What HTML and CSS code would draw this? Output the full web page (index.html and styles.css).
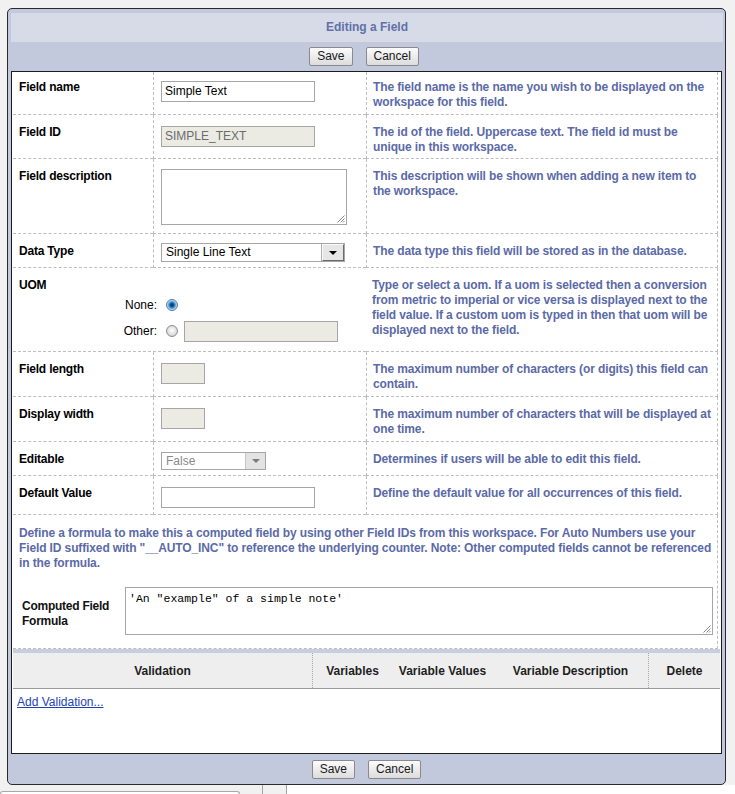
FILE: index.html
```html
<!DOCTYPE html>
<html>
<head>
<meta charset="utf-8">
<title>Editing a Field</title>
<link rel="stylesheet" href="styles.css">
</head>
<body>
<div class="dialog">
  <div class="title">Editing a Field</div>
  <div class="bar top"><span class="btn">Save</span><span class="btn">Cancel</span></div>
  <div class="panel">
    <div class="grid">
      <div class="lbl first">Field name</div>
      <div class="inp first"><div class="field w154">Simple Text</div></div>
      <div class="desc first">The field name is the name you wish to be displayed on the workspace for this field.</div>

      <div class="lbl">Field ID</div>
      <div class="inp"><div class="field w154 off">SIMPLE_TEXT</div></div>
      <div class="desc">The id of the field. Uppercase text. The field id must be unique in this workspace.</div>

      <div class="lbl">Field description</div>
      <div class="inp"><div class="textarea small"><svg class="grip" width="9" height="9" viewBox="0 0 9 9"><path d="M8.5 1.5 L1.5 8.5 M8.5 4.5 L4.5 8.5 M8.5 7 L7 8.5" stroke="#8a8a8a" stroke-width="1" fill="none"/></svg></div></div>
      <div class="desc">This description will be shown when adding a new item to the workspace.</div>

      <div class="lbl">Data Type</div>
      <div class="inp"><div class="select dt"><span class="sel-text">Single Line Text</span><span class="arrow"><span class="tri"></span></span></div></div>
      <div class="desc">The data type this field will be stored as in the database.</div>

      <div class="lbl uom">
        <div>UOM</div>
        <div class="opt none"><span class="opt-label">None:</span><span class="radio on"></span></div>
        <div class="opt other"><span class="opt-label">Other:</span><span class="radio"></span><div class="field w154 off uomfield"></div></div>
      </div>
      <div class="desc nolb">Type or select a uom. If a uom is selected then a conversion from metric to imperial or vice versa is displayed next to the field value. If a custom uom is typed in then that uom will be displayed next to the field.</div>

      <div class="lbl">Field length</div>
      <div class="inp"><div class="field w44 off"></div></div>
      <div class="desc">The maximum number of characters (or digits) this field can contain.</div>

      <div class="lbl">Display width</div>
      <div class="inp"><div class="field w44 off"></div></div>
      <div class="desc">The maximum number of characters that will be displayed at one time.</div>

      <div class="lbl">Editable</div>
      <div class="inp"><div class="select ed"><span class="sel-text">False</span><span class="arrow"><span class="tri"></span></span></div></div>
      <div class="desc">Determines if users will be able to edit this field.</div>

      <div class="lbl">Default Value</div>
      <div class="inp"><div class="field w154"></div></div>
      <div class="desc">Define the default value for all occurrences of this field.</div>
    </div>

    <div class="formula">
      <p class="fdesc">Define a formula to make this a computed field by using other Field IDs from this workspace. For Auto Numbers use your Field ID suffixed with "__AUTO_INC" to reference the underlying counter. Note: Other computed fields cannot be referenced in the formula.</p>
      <div class="frow">
        <div class="flabel">Computed Field<br>Formula</div>
        <div class="textarea big"><span class="mono">'An "example" of a simple note'</span><svg class="grip" width="9" height="9" viewBox="0 0 9 9"><path d="M8.5 1.5 L1.5 8.5 M8.5 4.5 L4.5 8.5 M8.5 7 L7 8.5" stroke="#8a8a8a" stroke-width="1" fill="none"/></svg></div>
      </div>
    </div>

    <div class="band"></div>
    <div class="vhead">
      <div class="c1">Validation</div>
      <div class="c2">Variables</div>
      <div class="c3">Variable Values</div>
      <div class="c4">Variable Description</div>
      <div class="c5">Delete</div>
    </div>
    <div class="vbody"><a href="#" class="link">Add Validation...</a></div>
  </div>
  <div class="bar bottom"><span class="btn">Save</span><span class="btn">Cancel</span></div>
</div>
<div class="under">
  <div class="ubox"></div>
  <div class="uline"></div>
  <div class="uline second"></div>
  <div class="urest"></div>
</div>
</body>
</html>
```

FILE: styles.css
```css
html, body {
  margin: 0;
  padding: 0;
  overflow: hidden;
}

body {
  background: #f1f1f1;
  font-family: "Liberation Sans", Arial, sans-serif;
  font-size: 12px;
  color: #000;
}

.dialog {
  margin: 8px 0 0 7px;
  width: 719px;
  height: 777px;
  box-sizing: border-box;
  border: 1px solid #2a2a2a;
  border-radius: 5px;
  background: #c3c9dc;
  padding: 4px 3px 0;
}

.title {
  height: 29px;
  background: #d7dbe7;
  color: #6170a9;
  font-weight: bold;
  text-align: center;
  line-height: 29px;
  margin-right: -1px;
}

.bar {
  height: 29px;
  box-sizing: border-box;
  display: flex;
  justify-content: center;
  gap: 13px;
  padding-top: 5px;
}

.bar.top {
  padding-right: 5px;
}

.bar.bottom {
  height: 30px;
  padding-top: 6px;
}

.btn {
  display: block;
  height: 19px;
  box-sizing: border-box;
  border: 1px solid #8a8a8a;
  border-radius: 2px;
  background: linear-gradient(#fcfcfc, #dcdcdc);
  padding: 0 7px;
  line-height: 17px;
  color: #1a1a1a;
}

.panel {
  height: 683px;
  box-sizing: border-box;
  background: #fff;
  border: 1px solid #1c1c1c;
  padding: 0 3px 0 1px;
}

.grid {
  display: grid;
  grid-template-columns: 140px 213px 352px;
  grid-template-rows: 43px 44px 75px 34px 84px 45px 45px 34px 39px;
}

.lbl, .inp, .desc {
  box-sizing: border-box;
  border-bottom: 1px dashed #bdbdbd;
  padding-top: 9px;
}

.lbl, .desc {
  padding-top: 10px;
}

.lbl {
  padding-left: 6px;
  font-weight: bold;
  line-height: 15px;
  letter-spacing: -0.2px;
}

.inp {
  border-left: 1px dashed #bdbdbd;
  padding-left: 7px;
}

.desc {
  border-left: 1px dashed #bdbdbd;
  border-right: 1px dashed #bdbdbd;
  padding-left: 6px;
  color: #5b6aa8;
  font-weight: bold;
  line-height: 15px;
  letter-spacing: -0.12px;
}

.desc.nolb {
  border-left: none;
}

.inp.first {
  padding-top: 7px;
}

.lbl.first, .desc.first {
  padding-top: 8px;
}

.field {
  height: 21px;
  box-sizing: border-box;
  border: 1px solid #a6a6a6;
  background: #fff;
  padding-left: 3px;
  line-height: 19px;
  margin-top: 2px;
  color: #000;
  letter-spacing: 0;
  font-weight: normal;
}

.w154 { width: 154px; }
.w44 { width: 44px; }

.field.off {
  background: #ebebe4;
  color: #6b6b6b;
}

.textarea {
  position: relative;
  box-sizing: border-box;
  border: 1px solid #a6a6a6;
  background: #fff;
}

.textarea.small {
  width: 186px;
  height: 56px;
  margin-top: 1px;
}

.grip {
  position: absolute;
  right: 1px;
  bottom: 1px;
}

.select {
  display: flex;
  box-sizing: border-box;
  border: 1px solid #a6a6a6;
  background: #fff;
}

.select.dt {
  width: 184px;
  height: 19px;
}

.select.ed {
  width: 105px;
  height: 18px;
  margin-top: 1px;
}

.sel-text {
  flex: 1;
  padding-left: 4px;
  line-height: 17px;
}

.select.ed .sel-text {
  line-height: 16px;
  color: #8a8a8a;
}

.arrow {
  display: flex;
  align-items: center;
  justify-content: center;
  box-sizing: border-box;
}

.select.dt .arrow {
  width: 22px;
  background: #e6e6e6;
  border: 1px solid;
  border-color: #fafafa #6a6a6a #6a6a6a #fafafa;
  box-shadow: -1px 0 0 #b0b0b0;
}

.select.ed .arrow {
  width: 20px;
  background: #e3e3e3;
  border-left: 1px solid #c6c6c6;
}

.tri {
  width: 0;
  height: 0;
  border-left: 4px solid transparent;
  border-right: 4px solid transparent;
  border-top: 4px solid #000;
}

.select.ed .tri {
  border-top-color: #7a7a7a;
}

.lbl.uom {
  grid-column: span 2;
}

.opt {
  display: flex;
  align-items: center;
  font-weight: normal;
  letter-spacing: 0;
}

.opt.none {
  height: 20px;
  margin-top: 2px;
}

.opt.other {
  height: 22px;
  margin-top: 5px;
}

.opt-label {
  text-align: right;
  padding-right: 9px;
  box-sizing: border-box;
  width: 147px;
}

.radio {
  width: 12px;
  height: 12px;
  box-sizing: border-box;
  border-radius: 50%;
  border: 1px solid #8c8c8c;
  background: radial-gradient(circle at 50% 45%, #ffffff 0, #f0f0f0 2px, #cfcfcf 6px);
}

.radio.on {
  border-color: #56789a;
  background: radial-gradient(circle at 50% 50%, #08355f 0, #0d4c86 1.5px, #3f92d2 3px, #a9d1f0 4.5px, #e9f3fb 6px);
}

.uomfield {
  margin: 0 0 0 6px;
  height: 21px;
}

.formula {
  height: 134px;
  box-sizing: border-box;
  border-right: 1px dashed #bdbdbd;
  border-bottom: 1px dashed #bdbdbd;
  padding: 11px 0 0 6px;
}

.fdesc {
  margin: 0;
  color: #5b6aa8;
  font-weight: bold;
  line-height: 15px;
  letter-spacing: -0.12px;
}

.frow {
  display: flex;
  align-items: center;
  margin-top: 16px;
  padding-left: 3px;
}

.flabel {
  width: 103px;
  font-weight: bold;
  line-height: 15px;
  color: #111;
  padding-top: 6px;
  letter-spacing: -0.25px;
}

.textarea.big {
  width: 588px;
  height: 48px;
  padding: 3px 0 0 3px;
}

.mono {
  font-family: "Liberation Mono", "Courier New", monospace;
  font-size: 11.5px;
  line-height: 14px;
  white-space: pre;
}

.band {
  height: 4px;
  background: #c8cedf;
  margin-right: -2px;
}

.vhead {
  display: flex;
  height: 36px;
  box-sizing: border-box;
  background: #eeeeee;
  border-bottom: 1px solid #9b9b9b;
  margin-right: -2px;
  font-weight: bold;
  color: #1e1e1e;
}

.vhead > div {
  display: flex;
  align-items: center;
  justify-content: center;
  box-sizing: border-box;
}

.c1 { width: 300px; border-right: 1px dotted #a8a8a8; }
.c2 { width: 79px; }
.c3 { width: 101px; }
.c4 { width: 155px; }
.c5 { width: 72px; border-left: 1px dotted #a8a8a8; }

.vbody {
  height: 64px;
  box-sizing: border-box;
  padding: 6px 0 0 4px;
  line-height: 15px;
}

.link {
  color: #1e43b8;
  text-decoration: underline;
}

.under {
  display: flex;
  height: 9px;
}

.ubox {
  width: 240px;
  margin-top: 6px;
  box-sizing: border-box;
  border: 1px solid #a9a9a9;
  border-bottom: none;
  border-radius: 6px 6px 0 0;
  background: #fff;
}

.uline {
  width: 1px;
  margin-left: 22px;
  background: #a4a4a4;
}

.uline.second {
  margin-left: 23px;
}

.urest {
  flex: 1;
  background: #fff;
}
```
